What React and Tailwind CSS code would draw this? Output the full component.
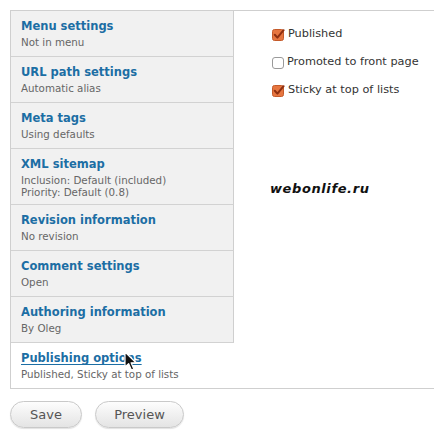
import React from 'react'

const tabs = [
    { title: 'Menu settings', desc: ['Not in menu'] },
    { title: 'URL path settings', desc: ['Automatic alias'] },
    { title: 'Meta tags', desc: ['Using defaults'] },
    { title: 'XML sitemap', desc: ['Inclusion: Default (included)', 'Priority: Default (0.8)'] },
    { title: 'Revision information', desc: ['No revision'] },
    { title: 'Comment settings', desc: ['Open'] },
    { title: 'Authoring information', desc: ['By Oleg'] },
    { title: 'Publishing options', desc: ['Published, Sticky at top of lists'], active: true },
]

const options = [
    { label: 'Published', checked: true },
    { label: 'Promoted to front page', checked: false },
    { label: 'Sticky at top of lists', checked: true },
]

function Checkbox({ checked }) {
    if (!checked) {
        return <span className="block w-[12px] h-[12px] mt-[1px] rounded-[3px] border border-[#9a9a9a] bg-white" />
    }
    return (
        <svg width="13" height="13" viewBox="0 0 13 13" className="block">
            <rect x="0.5" y="1.5" width="11" height="11" rx="2" fill="#e6753f" stroke="#c45a2a" />
            <path d="M2.8 6.8 L5.4 9.6 L11.6 2.2" fill="none" stroke="#8e2f10" strokeWidth="2" strokeLinecap="round" strokeLinejoin="round" />
        </svg>
    )
}

function Cursor() {
    // mouse pointer sitting over "options"
    return (
        <svg width="14" height="21" viewBox="0 0 14 21" className="absolute left-[124px] top-[351px]">
            <path d="M1 1 L1 16 L4.6 12.6 L7.4 19 L9.8 18 L7.1 11.8 L12 11.8 Z" fill="#111" stroke="#fff" strokeWidth="1.2" strokeLinejoin="round" />
        </svg>
    )
}

export default function App() {
    return (
        <div className="relative w-[434px] h-[440px] overflow-hidden bg-white font-['DejaVu_Sans',sans-serif]">

            {/* Vertical tabs */}
            <div className="flex ml-[10px] mt-[10px] w-[440px] border-y border-l border-[#cfcfcf]">
                <div className="w-[223px] shrink-0 flex flex-col">
                    {tabs.map((tab, i) => (
                        <div
                            key={i}
                            className={`
                                pl-[10px] pt-[8px]
                                ${tab.desc.length > 1 ? 'pb-[6px]' : 'pb-[8px]'}
                                ${i < tabs.length - 1 ? 'border-b border-[#d2d2d2]' : ''}
                                ${tab.active ? 'bg-white' : 'bg-[#f1f1f1] border-r border-r-[#cfcfcf]'}
                            `}
                        >
                            <div className={`text-[11.5px] leading-[14px] font-bold text-[#1c6ea4] ${tab.active ? 'underline underline-offset-[1.5px]' : ''}`}>
                                {tab.title}
                            </div>
                            <div className="mt-[3px] text-[10.3px] leading-[12px] text-[#666]">
                                {tab.desc.map((d, j) => <div key={j}>{d}</div>)}
                            </div>
                        </div>
                    ))}
                </div>

                {/* Pane */}
                <div className="relative flex-1 bg-white pl-[38px] pt-[15px]">
                    <div className="flex flex-col gap-[12px]">
                        {options.map((o, i) => (
                            <div key={i} className="flex items-center gap-[3px] h-[16px]">
                                <Checkbox checked={o.checked} />
                                <span className="text-[11.3px] text-[#333]">{o.label}</span>
                            </div>
                        ))}
                    </div>
                    <div className="absolute left-[36px] top-[168px] text-[13px] font-bold italic tracking-[0.6px] text-[#111]">
                        webonlife.ru
                    </div>
                </div>
            </div>

            {/* Buttons */}
            <div className="flex gap-[13px] ml-[10px] mt-[12px]">
                <button className="h-[27px] w-[72px] rounded-full border border-[#c9c9c9] bg-gradient-to-b from-[#fdfdfd] to-[#e4e4e4] text-[13px] text-[#555] shadow-[0_1px_1px_rgba(0,0,0,0.12)]">
                    Save
                </button>
                <button className="h-[27px] w-[89px] rounded-full border border-[#c9c9c9] bg-gradient-to-b from-[#fdfdfd] to-[#e4e4e4] text-[13px] text-[#555] shadow-[0_1px_1px_rgba(0,0,0,0.12)]">
                    Preview
                </button>
            </div>

            <Cursor />
        </div>
    )
}
